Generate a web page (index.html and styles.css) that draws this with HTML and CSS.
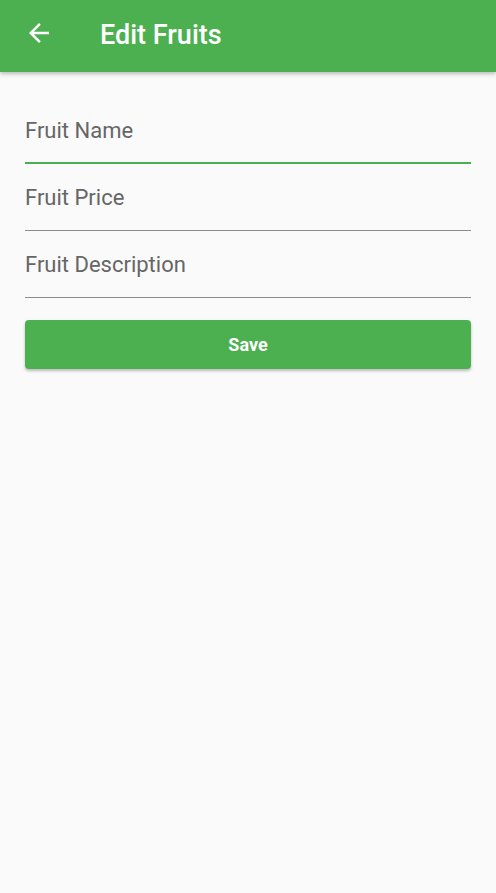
FILE: index.html
```html
<!DOCTYPE html>
<html>
<head>
<meta charset="utf-8">
<link rel="stylesheet" href="styles.css">
</head>
<body>
<header class="appbar">
  <span class="back">
    <svg width="30" height="30" viewBox="0 0 24 24"><path fill="#fff" d="M20 11H7.83l5.59-5.59L12 4l-8 8 8 8 1.41-1.41L7.83 13H20v-2z"/></svg>
  </span>
  <h1 class="title">Edit Fruits</h1>
</header>
<main class="form">
  <div class="field focused"><span class="label">Fruit Name</span></div>
  <div class="field"><span class="label">Fruit Price</span></div>
  <div class="field"><span class="label">Fruit Description</span></div>
  <button class="save">Save</button>
</main>
</body>
</html>
```
FILE: styles.css
```css
html, body { margin: 0; padding: 0; }
body {
  background: #fafafa;
  font-family: Roboto, "Noto Sans", sans-serif;
  width: 496px;
  height: 893px;
  overflow: hidden;
}
.appbar {
  height: 72px;
  background: #4caf50;
  display: flex;
  align-items: center;
  box-shadow: 0 2px 4px rgba(0,0,0,0.25);
  position: relative;
  z-index: 1;
}
.back {
  display: flex;
  margin-left: 24px;
  margin-top: -6px;
}
.title {
  margin: -3px 0 0 46px;
  color: #fff;
  font-size: 27px;
  font-weight: 500;
}
.form {
  padding: 25px 25px 0 25px;
  display: flex;
  flex-direction: column;
}
.field {
  padding: 22px 0 20px 0;
  border-bottom: 1px solid #8c8c8c;
}
.field.focused {
  padding-bottom: 19px;
  border-bottom: 2px solid #4caf50;
}
.label {
  display: block;
  font-size: 22px;
  line-height: 24px;
  color: #666;
}
.save {
  margin-top: 22px;
  height: 49px;
  border: none;
  border-radius: 4px;
  background: #4caf50;
  color: #fff;
  font-family: Roboto, sans-serif;
  font-size: 18px;
  font-weight: 700;
  box-shadow: 0 2px 3px rgba(0,0,0,0.25);
}
```
